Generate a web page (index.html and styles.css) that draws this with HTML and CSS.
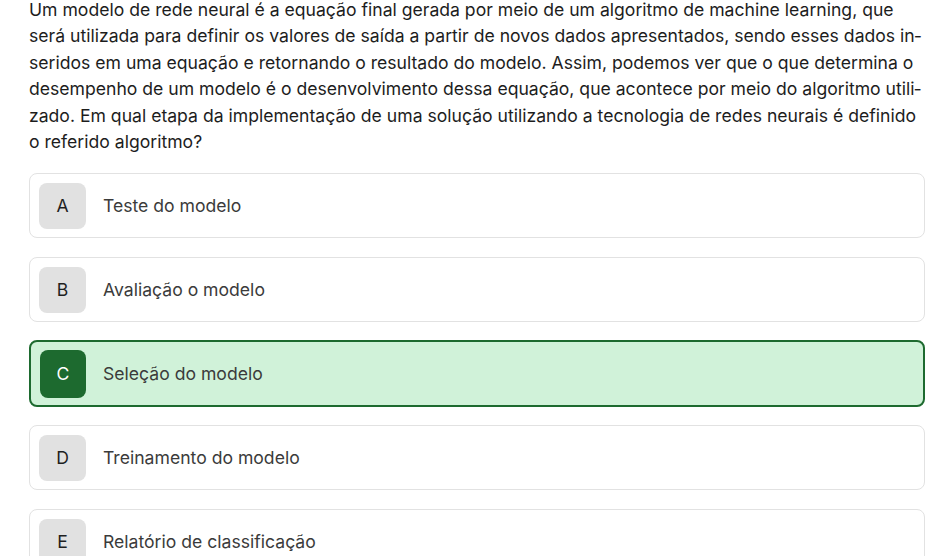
FILE: index.html
```html
<!DOCTYPE html>
<html lang="pt-BR">
<head>
<meta charset="utf-8">
<link rel="stylesheet" href="styles.css">
</head>
<body>
<main class="question">
  <p class="statement">Um modelo de rede neural é a equação final gerada por meio de um algoritmo de machine learning, que será utilizada para definir os valores de saída a partir de novos dados apresentados, sendo esses dados in&shy;seridos em uma equação e retornando o resultado do modelo. Assim, podemos ver que o que determina o desempenho de um modelo é o desenvolvimento dessa equação, que acontece por meio do algoritmo utili&shy;zado. Em qual etapa da implementação de uma solução utilizando a tecnologia de redes neurais é definido o referido algoritmo?</p>
  <ul class="options">
    <li class="option"><span class="letter">A</span><span class="label">Teste do modelo</span></li>
    <li class="option"><span class="letter">B</span><span class="label">Avaliação o modelo</span></li>
    <li class="option selected"><span class="letter">C</span><span class="label">Seleção do modelo</span></li>
    <li class="option"><span class="letter">D</span><span class="label">Treinamento do modelo</span></li>
    <li class="option"><span class="letter">E</span><span class="label">Relatório de classificação</span></li>
  </ul>
</main>
</body>
</html>
```

FILE: styles.css
```css
html, body {
  margin: 0;
  padding: 0;
  background: #ffffff;
}
body {
  font-family: Inter, "Noto Sans", sans-serif;
  color: #1d1d1d;
}
.question {
  width: 896px;
  padding-left: 29px;
}
.statement {
  margin: -3px 0 0 0;
  font-size: 17.6px;
  line-height: 26.4px;
  color: #1d1d1d;
}
.options {
  list-style: none;
  margin: 18px 0 0 0;
  padding: 0;
  display: flex;
  flex-direction: column;
  gap: 19px;
}
.option {
  display: flex;
  align-items: center;
  gap: 17px;
  height: 65px;
  box-sizing: border-box;
  padding: 0 9px;
  border: 1px solid #e2e2e2;
  border-radius: 8px;
  background: #ffffff;
}
.letter {
  width: 47px;
  height: 46px;
  border-radius: 8px;
  background: #e1e1e1;
  color: #1f1f1f;
  font-size: 17.6px;
  display: flex;
  align-items: center;
  justify-content: center;
}
.label {
  font-size: 17.6px;
  color: #3b3b3b;
}
.option.selected {
  height: 67px;
  margin: -1px 0;
  border: 2px solid #1d6a2f;
  background: #d0f2d9;
}
.option.selected .letter {
  width: 46px;
  height: 48px;
  background: #1d6a2f;
  color: #ffffff;
}
```
